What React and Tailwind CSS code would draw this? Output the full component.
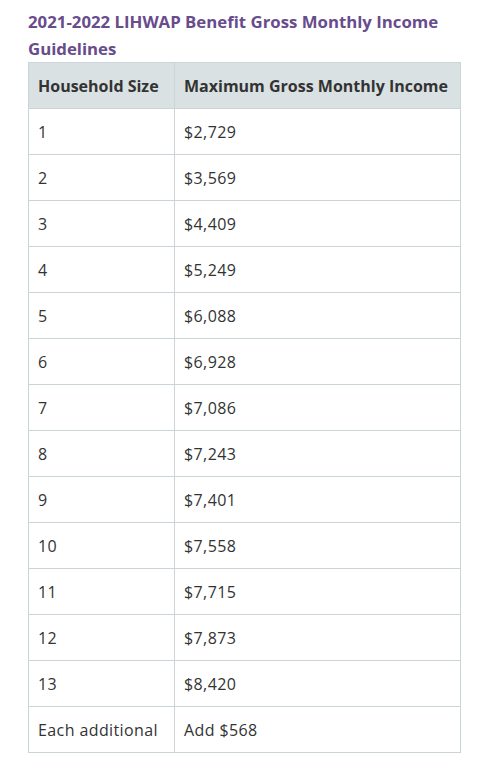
import React from "react";

const rows = [
  ["1", "$2,729"],
  ["2", "$3,569"],
  ["3", "$4,409"],
  ["4", "$5,249"],
  ["5", "$6,088"],
  ["6", "$6,928"],
  ["7", "$7,086"],
  ["8", "$7,243"],
  ["9", "$7,401"],
  ["10", "$7,558"],
  ["11", "$7,715"],
  ["12", "$7,873"],
  ["13", "$8,420"],
  ["Each additional", "Add $568"],
];

export default function App() {
  return (
    <div className="bg-white min-h-[775px] pl-[28px] pt-[8px] font-['Open_Sans',sans-serif]">
      <h3 className="text-[16.8px] font-bold leading-[27px] text-[#684c8c] w-[430px]">
        2021-2022 LIHWAP Benefit Gross Monthly Income Guidelines
      </h3>
      <table className="w-[433px] border-collapse text-[16px] text-[#333]">
        <thead>
          <tr className="bg-[#dae1e3] h-[46px]">
            <th className="border border-[#cbd4d6] pl-[9px] pr-[10px] text-left font-bold w-[146px] whitespace-nowrap">
              Household Size
            </th>
            <th className="border border-[#cbd4d6] pl-[9px] pr-[10px] text-left font-bold whitespace-nowrap">
              Maximum Gross Monthly Income
            </th>
          </tr>
        </thead>
        <tbody className="tracking-[0.4px]">
          {rows.map(([size, income]) => (
            <tr key={size} className="h-[46px]">
              <td className="border border-[#cbd4d6] pl-[9px] pr-[10px]">{size}</td>
              <td className="border border-[#cbd4d6] pl-[9px] pr-[10px]">{income}</td>
            </tr>
          ))}
        </tbody>
      </table>
    </div>
  );
}
